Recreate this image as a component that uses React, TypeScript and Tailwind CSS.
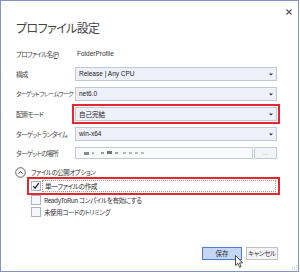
import React from "react";

const cjk =
  "font-['Noto_Sans_CJK_JP','Liberation_Sans',sans-serif] [font-feature-settings:'palt']";
const latin = "font-['Liberation_Sans','Noto_Sans_CJK_JP',sans-serif]";

function Arrow() {
  return (
    <svg width="4" height="3" viewBox="0 0 4 3" className="shrink-0">
      <path d="M0 0.5H4L2 2.6Z" fill="#333" />
    </svg>
  );
}

function Select({ value, jp }: { value: string; jp?: boolean }) {
  return (
    <div className="h-[14px] w-full bg-[#eef1f9] border border-[#c3c8d2] flex items-center pl-[3px] pr-[3px]">
      <span
        className={`flex-1 text-[6.5px] leading-none text-[#222] whitespace-nowrap ${
          jp ? cjk : latin
        }`}
      >
        {value}
      </span>
      <Arrow />
    </div>
  );
}

function Label({ children, tight }: { children: React.ReactNode; tight?: boolean }) {
  return (
    <div
      className={`w-[59px] shrink-0 leading-[14px] text-[#444] whitespace-nowrap ${
        tight ? "text-[6px] tracking-[-0.7px]" : "text-[6.5px] tracking-[-0.7px]"
      } ${cjk}`}
    >
      {children}
    </div>
  );
}

function Box({ checked }: { checked?: boolean }) {
  return (
    <div className="w-[10px] h-[10px] shrink-0 border border-[#aab3c7] bg-[#f5f7fc] flex items-center justify-center">
      {checked && (
        <svg width="8" height="8" viewBox="0 0 8 8">
          <path d="M1.3 4.2 L3.1 6.2 L6.8 1.2" stroke="#222" strokeWidth="1.2" fill="none" />
        </svg>
      )}
    </div>
  );
}

export default function App() {
  return (
    <div className="w-[300px] h-[273px] bg-white">
      <div className="w-[299px] h-[272px] border border-[#8194c3] flex flex-col relative bg-white">
        {/* header */}
        <div className="flex justify-between items-start pl-[15px] pr-[6px] pt-[8px]">
          <div
            className={`mt-[12px] text-[12px] leading-[14px] text-[#444] tracking-[-0.6px] whitespace-nowrap ${cjk}`}
          >
            プロファイル設定
          </div>
          <svg width="6" height="6" viewBox="0 0 6 6">
            <path d="M0.5 0.5 L5.5 5.5 M5.5 0.5 L0.5 5.5" stroke="#555" strokeWidth="1.2" />
          </svg>
        </div>

        {/* form rows */}
        <div className="flex flex-col gap-[6px] mt-[12px] pl-[15px] pr-[21px]">
          <div className="flex h-[14px] items-center">
            <Label>
              プロファイル名(<span className="underline">P</span>)
            </Label>
            <div className={`text-[6.5px] leading-none text-[#333] pl-[2px] ${latin}`}>
              FolderProfile
            </div>
          </div>
          <div className="flex h-[14px] items-center">
            <Label>構成</Label>
            <Select value="Release | Any CPU" />
          </div>
          <div className="flex h-[14px] items-center">
            <Label tight>ターゲット フレームワーク</Label>
            <Select value="net6.0" />
          </div>
          <div className="flex h-[14px] items-center">
            <Label>配置モード</Label>
            <div className="flex-1 -mx-[3px] -my-[3px] border-2 border-[#e8242c] p-px">
              <Select value="自己完結" jp />
            </div>
          </div>
          <div className="flex h-[14px] items-center">
            <Label>ターゲット ランタイム</Label>
            <Select value="win-x64" />
          </div>
          <div className="flex h-[12px] items-center">
            <Label>ターゲットの場所</Label>
            <div className="flex-1 h-[12px] flex gap-[1px]">
              <div className="flex-1 h-full bg-[#fafbfd] border border-[#c3c8d2] flex items-center gap-[3px] pl-[8px]">
                <span className="w-[5px] h-[3px] bg-[#8a8a8a]" />
                <span className="w-[2px] h-[2px] bg-[#b0b0b0]" />
                <span className="w-[3px] h-[2px] bg-[#9a9a9a] ml-[4px]" />
                <span className="w-[5px] h-[3px] bg-[#777] -mt-[2px]" />
                <span className="w-[3px] h-[2px] bg-[#a0a0a0]" />
                <span className="w-[3px] h-[2px] bg-[#b5b5b5] ml-[2px]" />
                <span className="w-[3px] h-[2px] bg-[#b5b5b5]" />
                <span className="w-[3px] h-[2px] bg-[#b5b5b5]" />
                <span className="w-[3px] h-[2px] bg-[#c0c0c0]" />
              </div>
              <div className="w-[23px] h-full bg-[#f3f4f7] border border-[#c3c8d2] flex items-center justify-center">
                <span className={`text-[6px] leading-none text-[#888] ${latin}`}>...</span>
              </div>
            </div>
          </div>
        </div>

        {/* section header */}
        <div className="flex items-center h-[12px] mt-[7px] pl-[14px]">
          <svg width="11" height="11" viewBox="0 0 11 11" className="shrink-0">
            <circle cx="5.5" cy="5.5" r="4.8" stroke="#555" strokeWidth="0.9" fill="none" />
            <path d="M3.4 6.6 L5.5 4.5 L7.6 6.6" stroke="#333" strokeWidth="1" fill="none" />
          </svg>
          <div className={`ml-[5px] text-[6.5px] leading-none text-[#333] tracking-[-0.5px] ${cjk}`}>
            ファイルの公開オプション
          </div>
        </div>

        {/* checked option in red frame */}
        <div className="-mt-[1px] ml-[26px] w-[253px] h-[18px] border-2 border-[#e8242c] flex items-center pl-[2px] pr-[2px]">
          <Box checked />
          <div className="flex-1 h-[12px] ml-[1px] border border-dotted border-[#9a9a9a] flex items-center pl-[2px]">
            <span className={`text-[6.5px] leading-none text-[#222] tracking-[-0.3px] ${cjk}`}>
              単一ファイルの作成
            </span>
          </div>
        </div>

        <div className="flex items-center h-[12px] -mt-[1px] pl-[30px]">
          <Box />
          <span className={`ml-[3px] text-[6.5px] leading-none text-[#333] tracking-[-0.4px] ${cjk}`}>
            ReadyToRun コンパイルを有効にする
          </span>
        </div>
        <div className="flex items-center h-[12px] pl-[30px]">
          <Box />
          <span className={`ml-[3px] text-[6.5px] leading-none text-[#333] tracking-[-0.4px] ${cjk}`}>
            未使用コードのトリミング
          </span>
        </div>

        {/* buttons */}
        <div className="mt-auto flex justify-end gap-[4px] pr-[20px] pb-[11px]">
          <div className="w-[40px] h-[13px] bg-[#c6d6f5] border border-[#4f7bd1] flex items-center justify-center">
            <span className={`text-[6.5px] leading-none text-[#333] ${cjk}`}>保存</span>
          </div>
          <div className="w-[32px] h-[13px] bg-[#f5f5f6] border border-[#c0c0c4] flex items-center justify-center">
            <span className={`text-[6.5px] leading-none text-[#333] tracking-[-0.3px] ${cjk}`}>
              キャンセル
            </span>
          </div>
        </div>

        {/* mouse cursor overlay */}
        <svg
          width="9"
          height="14"
          viewBox="0 0 9 14"
          className="absolute left-[234px] top-[254px]"
        >
          <path
            d="M0.5 0.5 L0.5 10.5 L2.9 8.4 L4.6 12.4 L6.1 11.7 L4.5 7.9 L7.6 7.9 Z"
            fill="#fff"
            stroke="#222"
            strokeWidth="0.8"
            strokeLinejoin="round"
          />
        </svg>

        {/* size grip */}
        <svg width="6" height="6" viewBox="0 0 6 6" className="absolute right-[0px] bottom-[0px]">
          <rect x="4" y="0" width="1" height="1" fill="#c8c8c8" />
          <rect x="2" y="2" width="1" height="1" fill="#c8c8c8" />
          <rect x="4" y="2" width="1" height="1" fill="#c8c8c8" />
          <rect x="0" y="4" width="1" height="1" fill="#c8c8c8" />
          <rect x="2" y="4" width="1" height="1" fill="#c8c8c8" />
          <rect x="4" y="4" width="1" height="1" fill="#c8c8c8" />
        </svg>
      </div>
    </div>
  );
}
